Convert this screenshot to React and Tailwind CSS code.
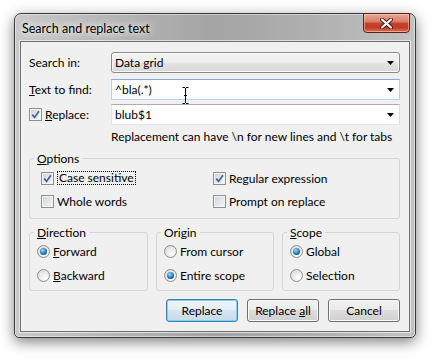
import React from 'react';

const Arrow = () => (
  <svg width="7" height="4" viewBox="0 0 7 4" className="mr-[5px] shrink-0">
    <path d="M0 0h7L3.5 4z" fill="#000" />
  </svg>
);

const Checkbox = ({ checked }) => (
  <span className="flex h-[13px] w-[13px] shrink-0 items-center justify-center border border-[#8e8f8f] bg-[linear-gradient(135deg,#cfd2d6,#f7f7f7)] shadow-[inset_0_0_0_1px_#f4f4f4]">
    {checked && (
      <svg width="9" height="9" viewBox="0 0 9 9">
        <path d="M1.2 4.6 3.6 7.4 7.9 1.2" fill="none" stroke="#4a5f97" strokeWidth="1.7" />
      </svg>
    )}
  </span>
);

const Radio = ({ checked }) => (
  <span className="flex h-[13px] w-[13px] shrink-0 items-center justify-center rounded-full border border-[#8f8f8f] bg-[radial-gradient(circle_at_65%_70%,#ffffff,#d3d3d3)]">
    {checked && (
      <span className="h-[7px] w-[7px] rounded-full bg-[radial-gradient(circle_at_40%_35%,#a6dcf7,#1f75b8_55%,#0c3c6e)]" />
    )}
  </span>
);

const CheckRow = ({ checked, focused, children }) => (
  <div className="flex h-[16px] items-center gap-[3px]">
    <Checkbox checked={checked} />
    <span className={focused ? 'border border-dotted border-black px-[1px] leading-[12px]' : ''}>{children}</span>
  </div>
);

const RadioRow = ({ checked, children }) => (
  <div className="flex h-[16px] items-center gap-[3px]">
    <Radio checked={checked} />
    <span>{children}</span>
  </div>
);

const GroupBox = ({ legend, className, children }) => (
  <fieldset className={`rounded-[3px] border border-[#d5d5d5] ${className}`}>
    <legend className="ml-[4px] px-[3px] leading-[15px]">{legend}</legend>
    {children}
  </fieldset>
);

const btn = 'h-[23px] w-[72px] rounded-[3px] border text-center leading-[21px]';
const grayBtn =
  'border-[#707070] bg-[linear-gradient(#f2f2f2,#ebebeb_50%,#dddddd_50%,#cfcfcf)] shadow-[inset_0_0_0_1px_#fbfbfb]';

export default function App() {
  return (
    <div className="flex h-[359px] w-[434px] items-start bg-white pl-[14px] pt-[13px] font-['Lato',sans-serif] text-[12px] leading-[15px] text-black">
      <div className="relative flex w-[402px] flex-col rounded-t-[7px] rounded-b-[5px] border border-[#3a3a3a] bg-[linear-gradient(90deg,#c9c9c9,#b5b5b5_25%,#a4a4a4_50%,#b0b0b0_75%,#c2c2c2)] px-[5px] pb-[5px] shadow-[0_4px_14px_rgba(0,0,0,0.5),inset_0_0_0_1px_rgba(255,255,255,0.45)]">
        <div className="flex h-[27px] items-center pl-[2px] pt-[1px] text-[12.5px] [text-shadow:0_0_6px_#fff,0_0_10px_#fff]">
          Search and replace text
        </div>

        <div className="absolute right-[5px] top-[-1px] flex h-[20px] w-[47px] items-center justify-center rounded-b-[4px] border border-[#5a2219] bg-[linear-gradient(#eaa898,#d97a63_45%,#c6432d_50%,#c23b26_75%,#dc7258)] shadow-[inset_0_0_0_1px_rgba(255,210,200,0.55)]">
          <svg width="13" height="11" viewBox="0 0 13 11">
            <path d="M2 1.5 11 9.5M11 1.5 2 9.5" stroke="#3b1a14" strokeWidth="4" strokeLinecap="round" />
            <path d="M2 1.5 11 9.5M11 1.5 2 9.5" stroke="#fff" strokeWidth="2.2" strokeLinecap="round" />
          </svg>
        </div>

        <div className="flex flex-col border border-[#6f6f6f] bg-[#f0f0f0] pb-[9px] pl-[8px] pr-[9px] pt-[10px] shadow-[0_0_0_1px_rgba(255,255,255,0.6)]">
          <div className="flex h-[21px] items-center">
            <span className="w-[82px]">Search in:</span>
            <div className="flex h-[21px] w-[289px] items-center justify-between rounded-[3px] border border-[#8a8a8a] bg-[linear-gradient(#f4f4f4,#eeeeee_50%,#e3e3e3_50%,#d9d9d9)] pl-[3px] shadow-[inset_0_0_0_1px_#fbfbfb]">
              <span>Data grid</span>
              <Arrow />
            </div>
          </div>

          <div className="mt-[6px] flex h-[21px] items-center">
            <span className="w-[82px]">
              <u>T</u>ext to find:
            </span>
            <div className="relative flex h-[21px] w-[289px] items-center justify-between border border-[#b7d2ec] border-t-[#86acd8] bg-white pl-[3px]">
              <span>^bla(.*)</span>
              <Arrow />
              <svg width="7" height="17" viewBox="0 0 7 17" className="absolute left-[70px] top-[7px]">
                <path d="M0.5 0.5h2.5M4 0.5h2.5M3.5 1v15M0.5 16.5h2.5M4 16.5h2.5M2 8.5h3" stroke="#000" strokeWidth="1" fill="none" />
              </svg>
            </div>
          </div>

          <div className="mt-[4px] flex h-[21px] items-center">
            <div className="flex w-[82px] items-center gap-[3px]">
              <Checkbox checked />
              <span>
                <u>R</u>eplace:
              </span>
            </div>
            <div className="flex h-[21px] w-[289px] items-center justify-between border border-[#e3e9ef] border-l-[#e2e3ea] border-r-[#dbdfe6] border-t-[#abadb3] bg-white pl-[3px]">
              <span>blub$1</span>
              <Arrow />
            </div>
          </div>

          <div className="mt-[4px] pl-[82px]">Replacement can have \n for new lines and \t for tabs</div>

          <GroupBox
            className="mt-[7px]"
            legend={
              <>
                <u>O</u>ptions
              </>
            }
          >
            <div className="mt-[4px] grid grid-cols-[172px_1fr] gap-y-[7px] pb-[9px] pl-[11px]">
              <CheckRow checked focused>
                Case sensitive
              </CheckRow>
              <CheckRow checked>Regular expression</CheckRow>
              <CheckRow>Whole words</CheckRow>
              <CheckRow>Prompt on replace</CheckRow>
            </div>
          </GroupBox>

          <div className="mt-[6px] flex gap-[8px]">
            <GroupBox
              className="w-[119px]"
              legend={
                <>
                  <u>D</u>irection
                </>
              }
            >
              <div className="mt-[3px] flex flex-col gap-[8px] pb-[7px] pl-[7px]">
                <RadioRow checked>
                  <u>F</u>orward
                </RadioRow>
                <RadioRow>
                  <u>B</u>ackward
                </RadioRow>
              </div>
            </GroupBox>
            <GroupBox className="w-[118px]" legend="Origin">
              <div className="mt-[3px] flex flex-col gap-[8px] pb-[7px] pl-[7px]">
                <RadioRow>From cursor</RadioRow>
                <RadioRow checked>Entire scope</RadioRow>
              </div>
            </GroupBox>
            <GroupBox
              className="w-[118px]"
              legend={
                <>
                  <u>S</u>cope
                </>
              }
            >
              <div className="mt-[3px] flex flex-col gap-[8px] pb-[7px] pl-[7px]">
                <RadioRow checked>Global</RadioRow>
                <RadioRow>Selection</RadioRow>
              </div>
            </GroupBox>
          </div>

          <div className="mt-[8px] flex justify-end gap-[9px]">
            <button className={`${btn} border-[#3c7fb1] bg-[linear-gradient(#eef5fa,#e4eef6_50%,#d6e5f0_50%,#c9dbe9)] shadow-[inset_0_0_0_1px_#7fd0f5]`}>
              Replace
            </button>
            <button className={`${btn} ${grayBtn}`}>
              Replace <u>a</u>ll
            </button>
            <button className={`${btn} ${grayBtn}`}>Cancel</button>
          </div>
        </div>
      </div>
    </div>
  );
}
